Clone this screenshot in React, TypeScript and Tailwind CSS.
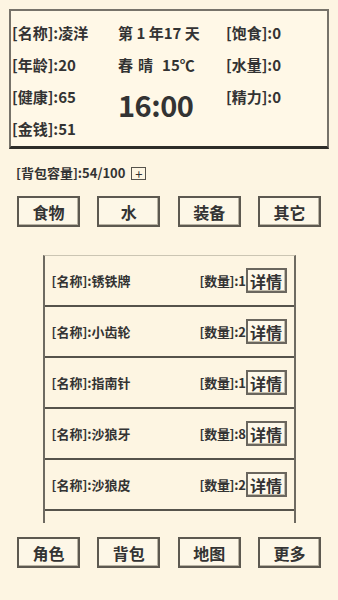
import React from 'react';

const items = [
  { name: '锈铁牌', count: 1 },
  { name: '小齿轮', count: 2 },
  { name: '指南针', count: 1 },
  { name: '沙狼牙', count: 8 },
  { name: '沙狼皮', count: 2 },
];

const tabs = ['食物', '水', '装备', '其它'];
const navs = ['角色', '背包', '地图', '更多'];

function BoxButton({ label }: { label: string }) {
  return (
    <button className="w-[63px] h-[31px] border-2 border-[#5d5950] bg-[#fdf7e7] shadow-[inset_-1px_-1px_0_#b9b3a3] text-[16px] font-bold text-[#333] leading-none">
      {label}
    </button>
  );
}

export default function App() {
  return (
    <div
      className="w-[338px] h-[600px] bg-[#fdf5e2] text-[#333] flex flex-col overflow-hidden"
      style={{ fontFamily: '"Noto Sans CJK SC", "Noto Sans", sans-serif' }}
    >
      {/* Status panel */}
      <div className="mx-[9px] mt-[9px] h-[140px] border-2 border-[#77736a] border-b-[3px] border-b-[#2e2d29] bg-[#fff8e7] flex pt-[6px] pl-[1px] text-[15px] font-bold">
        <div className="w-[106px] flex flex-col">
          <div className="h-[32px] flex items-center">[名称]:凌洋</div>
          <div className="h-[32px] flex items-center">[年龄]:20</div>
          <div className="h-[32px] flex items-center">[健康]:65</div>
          <div className="h-[32px] flex items-center">[金钱]:51</div>
        </div>
        <div className="w-[108px] flex flex-col">
          <div className="h-[32px] flex items-center">第 1 年17 天</div>
          <div className="h-[32px] flex items-center">
            <span>春</span>
            <span className="ml-[5px]">晴</span>
            <span className="ml-[9px]">15℃</span>
          </div>
          <div className="mt-[8px] text-[29px] leading-[30px] font-bold tracking-[-0.5px]">16:00</div>
        </div>
        <div className="flex-1 flex flex-col">
          <div className="h-[32px] flex items-center">[饱食]:0</div>
          <div className="h-[32px] flex items-center">[水量]:0</div>
          <div className="h-[32px] flex items-center">[精力]:0</div>
        </div>
      </div>

      {/* Capacity */}
      <div className="mt-[14px] h-[20px] pl-[16px] flex items-center text-[13px] font-bold">
        <span>[背包容量]:54/100</span>
        <span className="ml-[6px] w-[15px] h-[13px] border border-[#55524b] flex items-center justify-center text-[13px] leading-none font-normal">
          +
        </span>
      </div>

      {/* Tabs */}
      <div className="mt-[13px] px-[17px] flex justify-between">
        {tabs.map((t) => (
          <BoxButton key={t} label={t} />
        ))}
      </div>

      {/* Item list */}
      <div className="mt-[28px] mx-auto w-[253px] h-[268px] overflow-hidden border-t border-t-[#cbc5b3] border-x-2 border-x-[#6e6a61]">
        {items.map((item, i) => (
          <div
            key={i}
            className="h-[51px] border-b-2 border-[#56534b] flex items-center pl-[7px] pr-[7px] text-[13px] font-bold"
          >
            <span className="flex-1">[名称]:{item.name}</span>
            <span className="tracking-[-0.3px]">[数量]:{item.count}</span>
            <button className="w-[41px] h-[25px] border-2 border-[#6a665e] bg-[#fdf8ea] shadow-[inset_-1px_-1px_0_#c2bcab] text-[16px] font-bold leading-none">
              详情
            </button>
          </div>
        ))}
        {/* next row, scrolled out of view */}
        <div className="h-[51px] flex pt-[13px] pr-[7px] justify-end">
          <div className="w-[41px] h-[25px] border-2 border-[#6a665e] bg-[#fdf8ea]" />
        </div>
      </div>

      {/* Bottom nav */}
      <div className="mt-[14px] px-[17px] flex justify-between">
        {navs.map((t) => (
          <BoxButton key={t} label={t} />
        ))}
      </div>
    </div>
  );
}
